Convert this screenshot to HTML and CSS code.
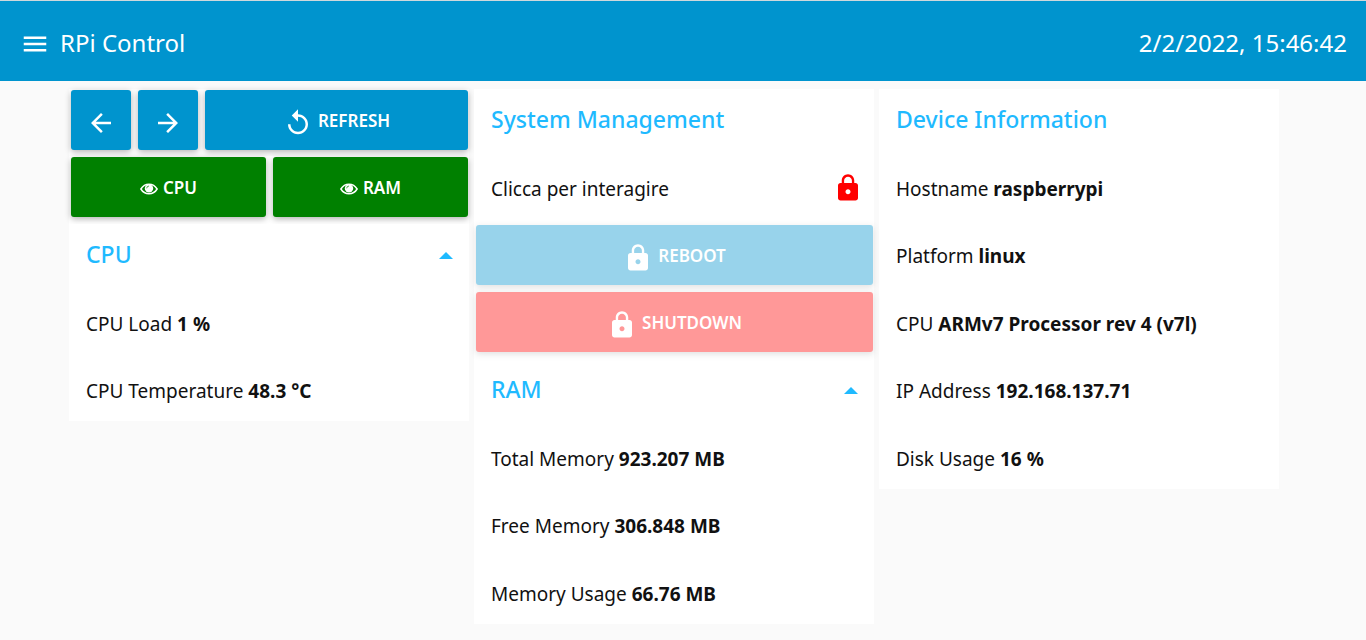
FILE: index.html
```html
<!DOCTYPE html>
<html lang="it">
<head>
<meta charset="utf-8">
<title>RPi Control</title>
<link rel="stylesheet" href="styles.css">
</head>
<body>
<svg class="defs" aria-hidden="true">
  <symbol id="lock" viewBox="0 0 24 24"><path d="M18 8h-1V6c0-2.760-2.240-5-5-5S7 3.240 7 6v2H6c-1.100 0-2 .9-2 2v10c0 1.100.9 2 2 2h12c1.100 0 2-.9 2-2V10c0-1.100-.9-2-2-2zm-6 9c-1.100 0-2-.9-2-2s.9-2 2-2 2 .9 2 2-.9 2-2 2zm3.100-9H8.900V6c0-1.710 1.390-3.100 3.100-3.100s3.100 1.390 3.100 3.100v2z"/></symbol>
  <symbol id="eye" viewBox="0 0 18 12"><path d="M.9 6C4.700-.4 13.300-.4 17.100 6 13.300 12.400 4.700 12.400 .9 6z" fill="none" stroke="currentColor" stroke-width="1.500"/><circle cx="9" cy="5.400" r="4.200"/><path d="M6.700 5.300A2.400 2.400 0 0 1 9 3" fill="none" stroke="#008000" stroke-width=".7"/></symbol>
</svg>
<header class="toolbar">
  <button class="menu" aria-label="Menu"><svg viewBox="0 0 24 24"><path d="M3 18h18v-2H3v2zm0-5h18v-2H3v2zm0-7v2h18V6H3z"/></svg></button>
  <h1 class="title">RPi Control</h1>
  <time class="clock">2/2/2022, 15:46:42</time>
</header>
<main class="groups">
  <section class="group">
    <div class="row row-buttons nav">
      <button class="btn" aria-label="Back"><svg class="icon" viewBox="0 0 24 24"><path d="M20 11H7.830l5.590-5.590L12 4l-8 8 8 8 1.410-1.410L7.830 13H20v-2z"/></svg></button>
      <button class="btn" aria-label="Forward"><svg class="icon" viewBox="0 0 24 24"><path d="M12 4l-1.410 1.410L16.170 11H4v2h12.170l-5.580 5.590L12 20l8-8z"/></svg></button>
      <button class="btn"><svg class="icon" viewBox="0 0 24 24"><path d="M12 5V1L7 6l5 5V7c3.310 0 6 2.690 6 6s-2.690 6-6 6-6-2.690-6-6H4c0 4.420 3.580 8 8 8s8-3.580 8-8-3.580-8-8-8z"/></svg>REFRESH</button>
    </div>
    <div class="row row-buttons halves">
      <button class="btn green"><svg class="eye"><use href="#eye"/></svg>CPU</button>
      <button class="btn green"><svg class="eye"><use href="#eye"/></svg>RAM</button>
    </div>
    <h2 class="row heading">CPU<button class="toggle" aria-label="Collapse CPU"></button></h2>
    <p class="row text">CPU Load <b>1 %</b></p>
    <p class="row text">CPU Temperature <b>48.3 °C</b></p>
  </section>
  <section class="group">
    <h2 class="row heading">System Management</h2>
    <div class="row text">Clicca per interagire<button class="unlock" aria-label="Unlock"><svg class="icon"><use href="#lock"/></svg></button></div>
    <div class="row row-buttons"><button class="btn" disabled><svg class="icon"><use href="#lock"/></svg>REBOOT</button></div>
    <div class="row row-buttons"><button class="btn red" disabled><svg class="icon"><use href="#lock"/></svg>SHUTDOWN</button></div>
    <h2 class="row heading">RAM<button class="toggle" aria-label="Collapse RAM"></button></h2>
    <p class="row text">Total Memory <b>923.207 MB</b></p>
    <p class="row text">Free Memory <b>306.848 MB</b></p>
    <p class="row text">Memory Usage <b>66.76 MB</b></p>
  </section>
  <section class="group">
    <h2 class="row heading">Device Information</h2>
    <p class="row text">Hostname <b>raspberrypi</b></p>
    <p class="row text">Platform <b>linux</b></p>
    <p class="row text">CPU <b>ARMv7 Processor rev 4 (v7l)</b></p>
    <p class="row text">IP Address <b>192.168.137.71</b></p>
    <p class="row text">Disk Usage <b>16 %</b></p>
  </section>
</main>
</body>
</html>
```
FILE: styles.css
```css
* { box-sizing: border-box; }
body {
  margin: 0;
  background: #fafafa;
  color: #111;
  font-family: "Noto Sans", "Open Sans", sans-serif;
  font-size: 19px;
}
button { font: inherit; color: inherit; border: 0; background: none; padding: 0; }
.defs { position: absolute; width: 0; height: 0; }
.toolbar {
  display: flex;
  align-items: center;
  height: 81px;
  padding: 4px 19px 0 20px;
  background: #0094ce;
  border-top: 1px solid #cfd8dc;
  color: #fff;
}
.menu { display: flex; padding-top: 1px; }
.menu svg { width: 30px; height: 30px; fill: currentColor; }
.title, .clock { padding-bottom: 2px; font-size: 24px; font-weight: 400; }
.title { margin: 0 0 0 10px; }
.clock { margin-left: auto; }
.groups {
  display: grid;
  grid-template-columns: repeat(auto-fit, 400px);
  justify-content: center;
  align-items: start;
  gap: 5px;
  padding: 8px 0 16px;
  margin-right: 18px;
}
.group { display: grid; grid-auto-rows: 67px 68px; }
.row {
  display: flex;
  align-items: center;
  margin: 0;
  padding: 0 16px 3px 17px;
  background: #fff;
  white-space: pre;
}
.row:last-child { margin-bottom: 5px; padding-top: 2px; padding-bottom: 0; }
.heading { padding-bottom: 7px; font-size: 23px; font-weight: 500; color: #1fbaff; }
.row-buttons {
  display: grid;
  align-items: start;
  gap: 7px;
  padding: 1px 1px 0 2px;
}
.nav { grid-template-columns: 60px 60px 1fr; }
.halves { grid-template-columns: 1fr 1fr; }
.btn {
  display: flex;
  align-items: center;
  justify-content: center;
  gap: 5px;
  height: 60px;
  border-radius: 3px;
  background: #0094ce;
  box-shadow: 0 2px 6px rgba(0, 0, 0, .3);
  color: #fff;
  font-size: 17px;
  font-weight: 600;
}
.btn:disabled { opacity: .4; }
.green { background: #008000; }
.red { background: #f00; }
.icon { width: 30px; height: 30px; fill: currentColor; }
.btn .icon { margin-top: 5px; }
.eye { width: 18px; height: 14px; margin-top: 4px; fill: currentColor; }
.toggle {
  margin: 2px 0 0 auto;
  border: 7px solid transparent;
  border-top: 0;
  border-bottom: 7px solid #1fbaff;
}
.unlock { display: flex; margin: 0 -5px 2px auto; color: #f00; }
b { font-weight: 700; }
```
